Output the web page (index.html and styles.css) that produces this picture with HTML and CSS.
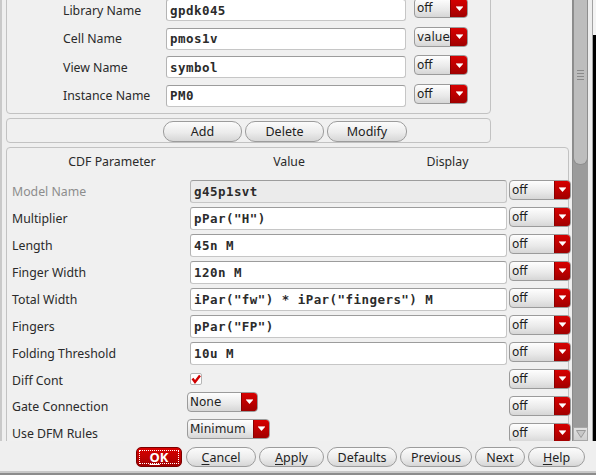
FILE: index.html
```html
<!DOCTYPE html>
<html>
<head>
<meta charset="utf-8">
<link rel="stylesheet" href="styles.css">
</head>
<body>
<div class="window">
  <div class="viewport">
    <div class="content">
      <div class="panel p1">
        <div class="form1">
          <span class="lbl">Library Name</span><div class="field">gpdk045</div>
          <div class="combo c-top"><span class="ctext">off</span><span class="cbtn"><svg width="7" height="5" viewBox="0 0 7 5"><rect x="0" y="0" width="7" height="1" fill="#fff" opacity="0.6"/><polygon points="0,1 7,1 3.5,5" fill="#fff"/></svg></span></div>
          <span class="lbl">Cell Name</span><div class="field">pmos1v</div>
          <div class="combo c-top"><span class="ctext">value</span><span class="cbtn"><svg width="7" height="5" viewBox="0 0 7 5"><rect x="0" y="0" width="7" height="1" fill="#fff" opacity="0.6"/><polygon points="0,1 7,1 3.5,5" fill="#fff"/></svg></span></div>
          <span class="lbl">View Name</span><div class="field">symbol</div>
          <div class="combo c-top"><span class="ctext">off</span><span class="cbtn"><svg width="7" height="5" viewBox="0 0 7 5"><rect x="0" y="0" width="7" height="1" fill="#fff" opacity="0.6"/><polygon points="0,1 7,1 3.5,5" fill="#fff"/></svg></span></div>
          <span class="lbl">Instance Name</span><div class="field">PM0</div>
          <div class="combo c-top"><span class="ctext">off</span><span class="cbtn"><svg width="7" height="5" viewBox="0 0 7 5"><rect x="0" y="0" width="7" height="1" fill="#fff" opacity="0.6"/><polygon points="0,1 7,1 3.5,5" fill="#fff"/></svg></span></div>
        </div>
      </div>
      <div class="panel p2">
        <div class="btn w79">Add</div>
        <div class="btn w79">Delete</div>
        <div class="btn w80">Modify</div>
      </div>
      <div class="panel p3">
        <div class="hdr"><span>CDF Parameter</span><span>Value</span><span>Display</span></div>
        <div class="form2">
          <span class="lbl dis">Model Name</span><div class="field disabled">g45p1svt</div>
          <div class="combo c-cdf"><span class="ctext">off</span><span class="cbtn"><svg width="7" height="5" viewBox="0 0 7 5"><rect x="0" y="0" width="7" height="1" fill="#fff" opacity="0.6"/><polygon points="0,1 7,1 3.5,5" fill="#fff"/></svg></span></div>

          <span class="lbl">Multiplier</span><div class="field">pPar("H")</div>
          <div class="combo c-cdf"><span class="ctext">off</span><span class="cbtn"><svg width="7" height="5" viewBox="0 0 7 5"><rect x="0" y="0" width="7" height="1" fill="#fff" opacity="0.6"/><polygon points="0,1 7,1 3.5,5" fill="#fff"/></svg></span></div>

          <span class="lbl">Length</span><div class="field">45n M</div>
          <div class="combo c-cdf"><span class="ctext">off</span><span class="cbtn"><svg width="7" height="5" viewBox="0 0 7 5"><rect x="0" y="0" width="7" height="1" fill="#fff" opacity="0.6"/><polygon points="0,1 7,1 3.5,5" fill="#fff"/></svg></span></div>

          <span class="lbl">Finger Width</span><div class="field">120n M</div>
          <div class="combo c-cdf"><span class="ctext">off</span><span class="cbtn"><svg width="7" height="5" viewBox="0 0 7 5"><rect x="0" y="0" width="7" height="1" fill="#fff" opacity="0.6"/><polygon points="0,1 7,1 3.5,5" fill="#fff"/></svg></span></div>

          <span class="lbl">Total Width</span><div class="field">iPar("fw") * iPar("fingers") M</div>
          <div class="combo c-cdf"><span class="ctext">off</span><span class="cbtn"><svg width="7" height="5" viewBox="0 0 7 5"><rect x="0" y="0" width="7" height="1" fill="#fff" opacity="0.6"/><polygon points="0,1 7,1 3.5,5" fill="#fff"/></svg></span></div>

          <span class="lbl">Fingers</span><div class="field">pPar("FP")</div>
          <div class="combo c-cdf"><span class="ctext">off</span><span class="cbtn"><svg width="7" height="5" viewBox="0 0 7 5"><rect x="0" y="0" width="7" height="1" fill="#fff" opacity="0.6"/><polygon points="0,1 7,1 3.5,5" fill="#fff"/></svg></span></div>

          <span class="lbl">Folding Threshold</span><div class="field">10u M</div>
          <div class="combo c-cdf"><span class="ctext">off</span><span class="cbtn"><svg width="7" height="5" viewBox="0 0 7 5"><rect x="0" y="0" width="7" height="1" fill="#fff" opacity="0.6"/><polygon points="0,1 7,1 3.5,5" fill="#fff"/></svg></span></div>

          <span class="lbl lbl-b">Diff Cont</span>
          <div class="checkcell"><span class="check"><svg width="10" height="10" viewBox="0 0 10 10"><path d="M1.5 4.5 L4 8 L9 1.5" fill="none" stroke="#d00000" stroke-width="2.4" stroke-linejoin="miter"/></svg></span></div>
          <div class="combo c-cdf"><span class="ctext">off</span><span class="cbtn"><svg width="7" height="5" viewBox="0 0 7 5"><rect x="0" y="0" width="7" height="1" fill="#fff" opacity="0.6"/><polygon points="0,1 7,1 3.5,5" fill="#fff"/></svg></span></div>

          <span class="lbl lbl-b lbl-up">Gate Connection</span>
          <div class="valcell"><div class="combo c-none"><span class="ctext">None</span><span class="cbtn"><svg width="7" height="5" viewBox="0 0 7 5"><rect x="0" y="0" width="7" height="1" fill="#fff" opacity="0.6"/><polygon points="0,1 7,1 3.5,5" fill="#fff"/></svg></span></div></div>
          <div class="combo c-cdf"><span class="ctext">off</span><span class="cbtn"><svg width="7" height="5" viewBox="0 0 7 5"><rect x="0" y="0" width="7" height="1" fill="#fff" opacity="0.6"/><polygon points="0,1 7,1 3.5,5" fill="#fff"/></svg></span></div>

          <span class="lbl lbl-b lbl-up">Use DFM Rules</span>
          <div class="valcell"><div class="combo c-min"><span class="ctext">Minimum</span><span class="cbtn"><svg width="7" height="5" viewBox="0 0 7 5"><rect x="0" y="0" width="7" height="1" fill="#fff" opacity="0.6"/><polygon points="0,1 7,1 3.5,5" fill="#fff"/></svg></span></div></div>
          <div class="combo c-cdf"><span class="ctext">off</span><span class="cbtn"><svg width="7" height="5" viewBox="0 0 7 5"><rect x="0" y="0" width="7" height="1" fill="#fff" opacity="0.6"/><polygon points="0,1 7,1 3.5,5" fill="#fff"/></svg></span></div>
        </div>
      </div>
    </div>
    <div class="vscroll">
      <div class="thumb">
        <span class="grip"></span><span class="grip"></span><span class="grip"></span><span class="grip"></span>
      </div>
      <div class="trough"></div>
      <div class="sdown"><svg width="10" height="8" viewBox="0 0 10 8"><polygon points="0.5,0.5 9.5,0.5 5,7.5" fill="#c8c8c8" stroke="#9a9a9a" stroke-width="1"/></svg></div>
    </div>
    <div class="edge">
      <div class="edge-light"></div>
      <div class="edge-dark"></div>
    </div>
  </div>
  <div class="footer">
    <div class="btn ok"><span class="okin"><u>O</u>K</span></div>
    <div class="btn f-cancel"><u>C</u>ancel</div>
    <div class="btn f-apply"><u>A</u>pply</div>
    <div class="btn f-def">Defaults</div>
    <div class="btn f-prev">Previous</div>
    <div class="btn f-next">Next</div>
    <div class="btn f-help"><u>H</u>elp</div>
  </div>
</div>
</body>
</html>
```
FILE: styles.css
```css
* { box-sizing: border-box; }
html, body { margin: 0; padding: 0; }
body {
  width: 596px;
  height: 475px;
  overflow: hidden;
  background: #efefef;
  font-family: "Noto Sans", "Open Sans", sans-serif;
  font-size: 12px;
  color: #2a2a2a;
}
.window {
  width: 596px;
  height: 475px;
  display: flex;
  flex-direction: column;
}
.viewport {
  height: 441px;
  display: flex;
  flex: none;
}
.content {
  width: 572px;
  overflow: hidden;
  border-left: 2px solid #c9c9c9;
  padding-left: 4px;
}
.panel {
  border: 1px solid #c2c2c2;
  border-radius: 4px;
  background: #f0f0f0;
}
.p1 {
  width: 485px;
  margin-top: -8px;
  padding: 6px 0 6px 56px;
}
.form1 {
  display: grid;
  grid-template-columns: 103px 240px 62px;
  column-gap: 0;
  grid-auto-rows: 22px;
  row-gap: 6.67px;
}
.form1 .combo { margin-left: 8px; margin-top: -1px; }
.lbl {
  display: flex;
  align-items: center;
  white-space: nowrap;
  color: #2a2a2a;
  font-size: 12.3px;
}
.lbl.dis { color: #8d8d8d; }
.field {
  background: #ffffff;
  border: 1px solid #c6c6c6;
  border-top-color: #9c9c9c;
  border-left-color: #b4b4b4;
  border-radius: 3px;
  font-family: "DejaVu Sans Mono", "Liberation Mono", monospace;
  font-weight: bold;
  font-size: 12.5px;
  letter-spacing: 0.45px;
  color: #2b2b2b;
  padding-left: 3px;
  display: flex;
  align-items: center;
  white-space: nowrap;
  overflow: hidden;
  height: 22px;
}
.field.disabled { background: #ebebeb; }
.combo {
  display: flex;
  height: 20px;
  border: 1px solid #9b9b9b;
  border-radius: 4px;
  overflow: hidden;
  background: linear-gradient(#fefefe, #e9e9e9 60%, #d6d6d6);
  font-family: "DejaVu Sans", sans-serif;
  font-size: 12px;
  color: #1e1e1e;
  align-self: start;
}
.ctext {
  flex: 1;
  padding-left: 2px;
  line-height: 18px;
  white-space: nowrap;
  overflow: hidden;
}
.cbtn {
  width: 16px;
  flex: none;
  background: linear-gradient(#d60000, #b80000 60%, #a00000);
  display: flex;
  align-items: center;
  justify-content: center;
  border-left: 1px solid #8a0000;
}
.c-top .cbtn { width: 17px; }
.p2 {
  width: 485px;
  margin-top: 4px;
  height: 25px;
  padding: 2px 0 0 156px;
  display: flex;
  gap: 3px;
}
.btn {
  height: 21px;
  border: 1px solid #9c9c9c;
  border-radius: 10px;
  background: linear-gradient(#fbfbfb, #ececec 55%, #d6d6d6);
  display: flex;
  align-items: center;
  justify-content: center;
  font-size: 12.5px;
  color: #222;
  flex: none;
}
.btn u { text-decoration-thickness: 1px; text-underline-offset: 2px; }
.w79 { width: 79px; }
.w80 { width: 80px; }
.p3 {
  width: 563px;
  margin-top: 4px;
  height: 420px;
  padding: 4px 0 0 5px;
}
.hdr {
  display: grid;
  grid-template-columns: 200px 154px 163px;
  height: 20px;
  line-height: 20px;
  font-size: 12.3px;
  text-align: center;
  color: #2a2a2a;
  margin-bottom: 8px;
}
.form2 {
  display: grid;
  grid-template-columns: 178px 317px 64px;
  column-gap: 0;
  grid-auto-rows: 27px;
}
.form2 .lbl { height: 23px; }
.form2 .lbl-b { height: 24px; }
.form2 .lbl-up { height: 21px; }
.form2 .field { height: 23px; }
.form2 .combo.c-cdf { margin-left: 2px; width: 62px; }
.checkcell { padding-top: 4px; }
.check {
  display: flex;
  width: 12px;
  height: 12px;
  background: #fff;
  border: 1px solid #b5b5b5;
  border-radius: 2px;
  align-items: center;
  justify-content: center;
}
.valcell { margin-left: -3px; margin-top: -4px; }
.c-none { width: 71px; }
.c-min { width: 83px; }
.vscroll {
  width: 16px;
  display: flex;
  flex-direction: column;
  background: #9b9b9b;
  border-left: 1px solid #8c8c8c;
}
.thumb {
  height: 165px;
  background: #bdbdbd;
  border: 1px solid #8e8e8e;
  border-top: none;
  border-radius: 0 0 7px 7px;
  display: flex;
  flex-direction: column;
  align-items: center;
  gap: 2px;
  padding-top: 70px;
}
.grip {
  width: 7px;
  height: 1px;
  background: #8a8a8a;
}
.trough { flex: 1; }
.sdown {
  height: 14px;
  background: linear-gradient(#e2e2e2, #cfcfcf);
  border: 1px solid #a8a8a8;
  display: flex;
  align-items: center;
  justify-content: center;
}
.edge {
  width: 8px;
  display: flex;
}
.edge-light {
  width: 5px;
  background: #ededed;
  border-right: 1px solid #a2a2a2;
}
.edge-dark {
  flex: 1;
  background: linear-gradient(#f4f4f4 0, #f4f4f4 35px, #000 35px);
}
.footer {
  height: 34px;
  padding: 6px 0 0 136px;
  display: flex;
  gap: 3px;
  border-bottom: 2px solid #8c8c8c;
  box-shadow: inset 0 -2px 0 #c8c8c8;
}
.footer .btn { height: 20px; }
.ok {
  width: 46px;
  margin-right: 1px;
  background: linear-gradient(#d80000, #bb0000 60%, #a00000);
  border-color: #7a0000;
  border-radius: 5px;
  padding: 2px;
}
.okin {
  width: 100%;
  height: 100%;
  border: 1px dotted #ffffff;
  color: #fff;
  font-weight: bold;
  font-size: 13px;
  display: flex;
  align-items: center;
  justify-content: center;
}
.f-cancel { width: 70px; }
.f-apply { width: 65px; }
.f-def { width: 70px; }
.f-prev { width: 72px; }
.f-next { width: 50px; }
.f-help { width: 57px; }
```
